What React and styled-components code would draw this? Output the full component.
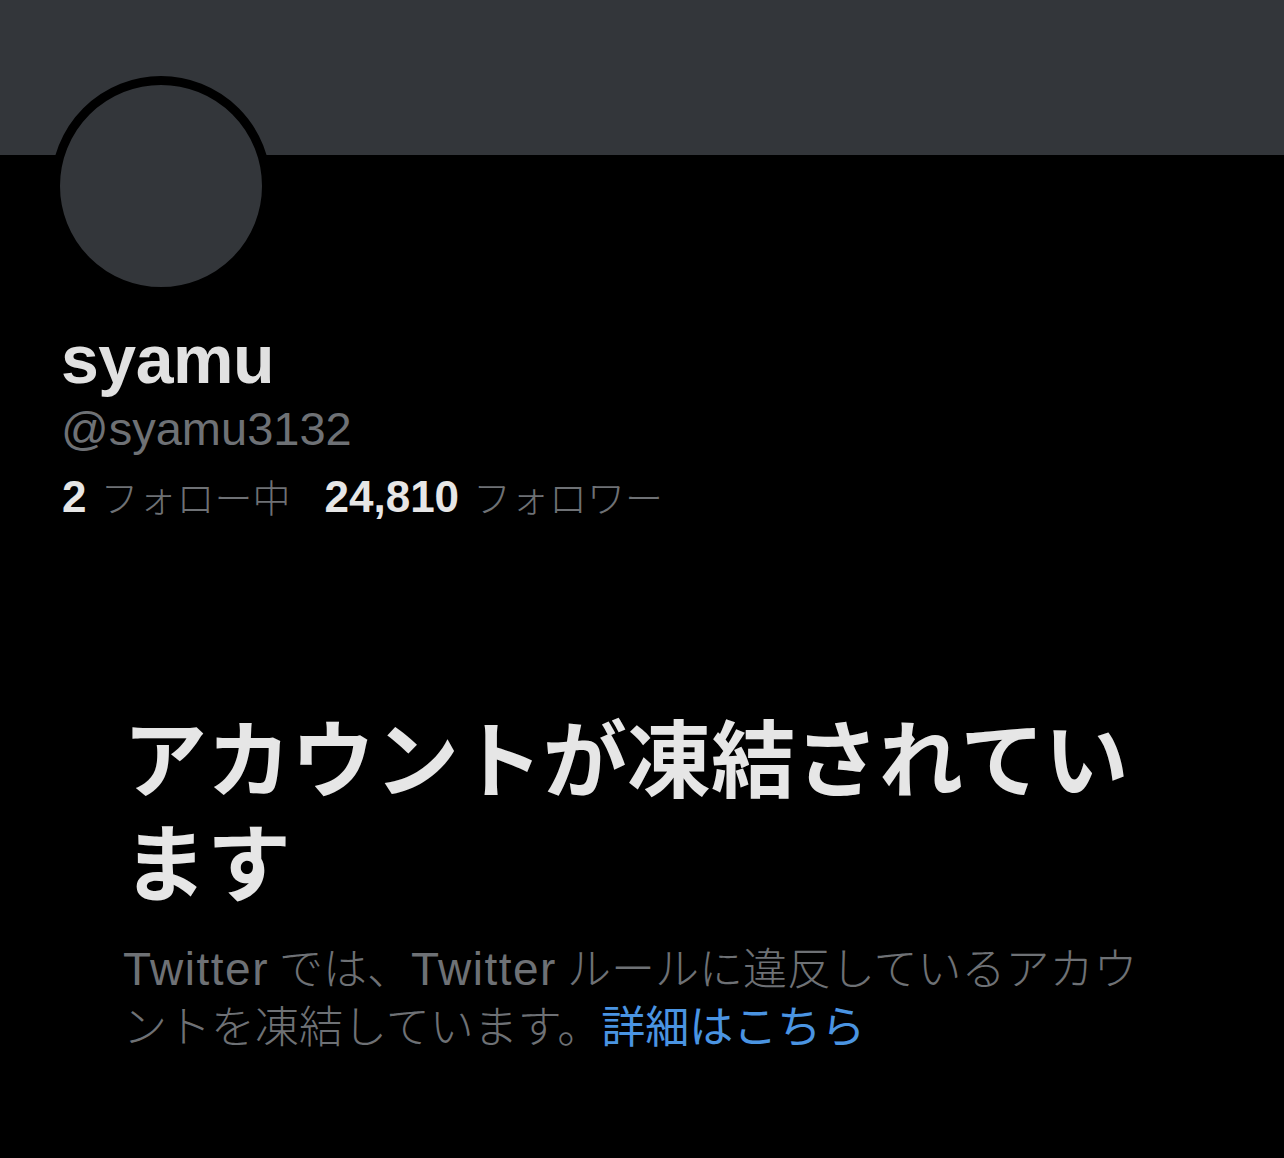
import React from "react";
import styled, { createGlobalStyle } from "styled-components";

const GlobalStyle = createGlobalStyle`
  html, body {
    margin: 0;
    padding: 0;
    background: #000;
  }
  body {
    font-family: "Liberation Sans", "Noto Sans CJK JP", sans-serif;
    -webkit-font-smoothing: antialiased;
  }
`;

const Page = styled.div`
  width: 1284px;
  min-height: 1158px;
  background: #000;
  overflow: hidden;
`;

const Banner = styled.div`
  height: 155px;
  background: #33363a;
`;

const Profile = styled.section`
  padding: 0 0 0 51px;
`;

const Avatar = styled.div`
  width: 202px;
  height: 202px;
  margin-top: -79px;
  border-radius: 50%;
  background: #33363a;
  border: 9px solid #000;
`;

const Name = styled.h1`
  margin: 26px 0 0 10px;
  font-family: "Liberation Sans", "Noto Sans CJK JP", sans-serif;
  font-weight: 700;
  font-size: 68px;
  line-height: 74px;
  color: #e1e1e1;
  letter-spacing: -0.5px;
`;

const Handle = styled.div`
  margin: 4px 0 0 10px;
  font-size: 47px;
  line-height: 58px;
  color: #6e7175;
`;

const Stats = styled.div`
  display: flex;
  gap: 34px;
  margin: 12px 0 0 11px;
  font-size: 44px;
  line-height: 52px;
`;

const Stat = styled.span`
  display: flex;
  align-items: baseline;
  gap: 14px;
`;

const Count = styled.b`
  font-weight: 700;
  color: #e6e6e6;
`;

const Label = styled.span`
  font-family: "Noto Sans CJK JP", sans-serif;
  font-weight: 300;
  color: #6e7175;
  font-size: 38px;
`;

const Notice = styled.section`
  width: 1024px;
  margin: 180px 0 0 123px;
`;

const Heading = styled.h2`
  margin: 0;
  font-family: "Noto Sans CJK JP", sans-serif;
  font-weight: 700;
  font-size: 84px;
  line-height: 104px;
  color: #e6e6e6;
`;

const Body = styled.p`
  margin: 30px 0 0;
  font-family: "Liberation Sans", "Noto Sans CJK JP", sans-serif;
  font-size: 44px;
  line-height: 58px;
  color: #6e7175;
`;

const Latin = styled.span`
  font-family: "Liberation Sans", sans-serif;
  font-size: 46px;
  line-height: 1;
  letter-spacing: 1.5px;
  margin-right: 10px;
`;

const Jp = styled.span`
  font-family: "Noto Sans CJK JP", sans-serif;
  font-weight: 300;
  line-height: 1;
`;

const Link = styled.a`
  color: #4a94e2;
  text-decoration: none;
  font-family: "Noto Sans CJK JP", sans-serif;
  font-weight: 400;
  line-height: 1;
`;

export default function App() {
  return (
    <Page>
      <GlobalStyle />
      <Banner />
      <Profile>
        <Avatar />
        <Name>syamu</Name>
        <Handle>@syamu3132</Handle>
        <Stats>
          <Stat>
            <Count>2</Count>
            <Label>フォロー中</Label>
          </Stat>
          <Stat>
            <Count>24,810</Count>
            <Label>フォロワー</Label>
          </Stat>
        </Stats>
      </Profile>
      <Notice>
        <Heading>アカウントが凍結されています</Heading>
        <Body>
          <Latin>Twitter</Latin>
          <Jp>では、</Jp>
          <Latin>Twitter</Latin>
          <Jp>ルールに違反しているアカウントを凍結しています。</Jp>
          <Link href="#">詳細はこちら</Link>
        </Body>
      </Notice>
    </Page>
  );
}
